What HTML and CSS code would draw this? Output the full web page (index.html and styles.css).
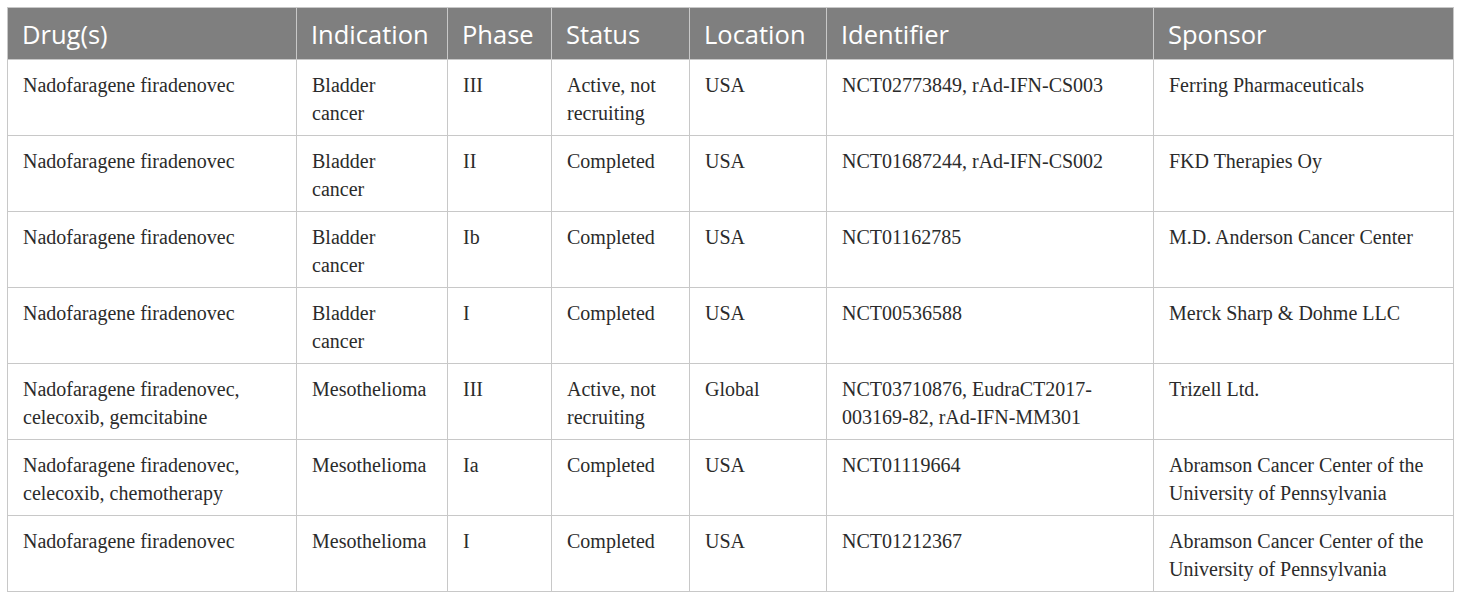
FILE: index.html
```html
<!DOCTYPE html>
<html>
<head>
<meta charset="utf-8">
<link rel="stylesheet" href="styles.css">
</head>
<body>
<table class="trials">
  <colgroup>
    <col class="c-drug"><col class="c-ind"><col class="c-phase"><col class="c-status"><col class="c-loc"><col class="c-id"><col class="c-sp">
  </colgroup>
  <thead>
    <tr><th>Drug(s)</th><th>Indication</th><th>Phase</th><th>Status</th><th>Location</th><th>Identifier</th><th>Sponsor</th></tr>
  </thead>
  <tbody>
    <tr><td>Nadofaragene firadenovec</td><td>Bladder cancer</td><td>III</td><td>Active, not recruiting</td><td>USA</td><td>NCT02773849, rAd-IFN-CS003</td><td>Ferring Pharmaceuticals</td></tr>
    <tr><td>Nadofaragene firadenovec</td><td>Bladder cancer</td><td>II</td><td>Completed</td><td>USA</td><td>NCT01687244, rAd-IFN-CS002</td><td>FKD Therapies Oy</td></tr>
    <tr><td>Nadofaragene firadenovec</td><td>Bladder cancer</td><td>Ib</td><td>Completed</td><td>USA</td><td>NCT01162785</td><td>M.D. Anderson Cancer Center</td></tr>
    <tr><td>Nadofaragene firadenovec</td><td>Bladder cancer</td><td>I</td><td>Completed</td><td>USA</td><td>NCT00536588</td><td>Merck Sharp &amp; Dohme LLC</td></tr>
    <tr><td>Nadofaragene firadenovec, celecoxib, gemcitabine</td><td>Mesothelioma</td><td>III</td><td>Active, not recruiting</td><td>Global</td><td>NCT03710876, EudraCT2017-003169-82, rAd-IFN-MM301</td><td>Trizell Ltd.</td></tr>
    <tr><td>Nadofaragene firadenovec, celecoxib, chemotherapy</td><td>Mesothelioma</td><td>Ia</td><td>Completed</td><td>USA</td><td>NCT01119664</td><td>Abramson Cancer Center of the University of Pennsylvania</td></tr>
    <tr><td>Nadofaragene firadenovec</td><td>Mesothelioma</td><td>I</td><td>Completed</td><td>USA</td><td>NCT01212367</td><td>Abramson Cancer Center of the University of Pennsylvania</td></tr>
  </tbody>
</table>
</body>
</html>
```
FILE: styles.css
```css
html, body { background: #ffffff; }
body { margin: 7px 0 0 7px; }
.trials {
  border-collapse: collapse;
  table-layout: fixed;
  width: 1446px;
  border: 1px solid #c8c8c8;
}
.c-drug { width: 289px; }
.c-ind { width: 151px; }
.c-phase { width: 104px; }
.c-status { width: 138px; }
.c-loc { width: 137px; }
.c-id { width: 327px; }
.c-sp { width: 300px; }
.trials th {
  background: #7f7f7f;
  color: #ffffff;
  font-family: "Open Sans", sans-serif;
  font-weight: 400;
  font-size: 25.5px;
  text-align: left;
  height: 51px;
  padding: 0 14px;
  border: 1px solid #c8c8c8;
  border-top: none;
  vertical-align: middle;
}
.trials td {
  font-family: "Liberation Serif", serif;
  font-size: 20px;
  line-height: 28px;
  color: #2b2b2b;
  vertical-align: top;
  padding: 11px 15px 8px;
  border: 1px solid #c8c8c8;
}
```
